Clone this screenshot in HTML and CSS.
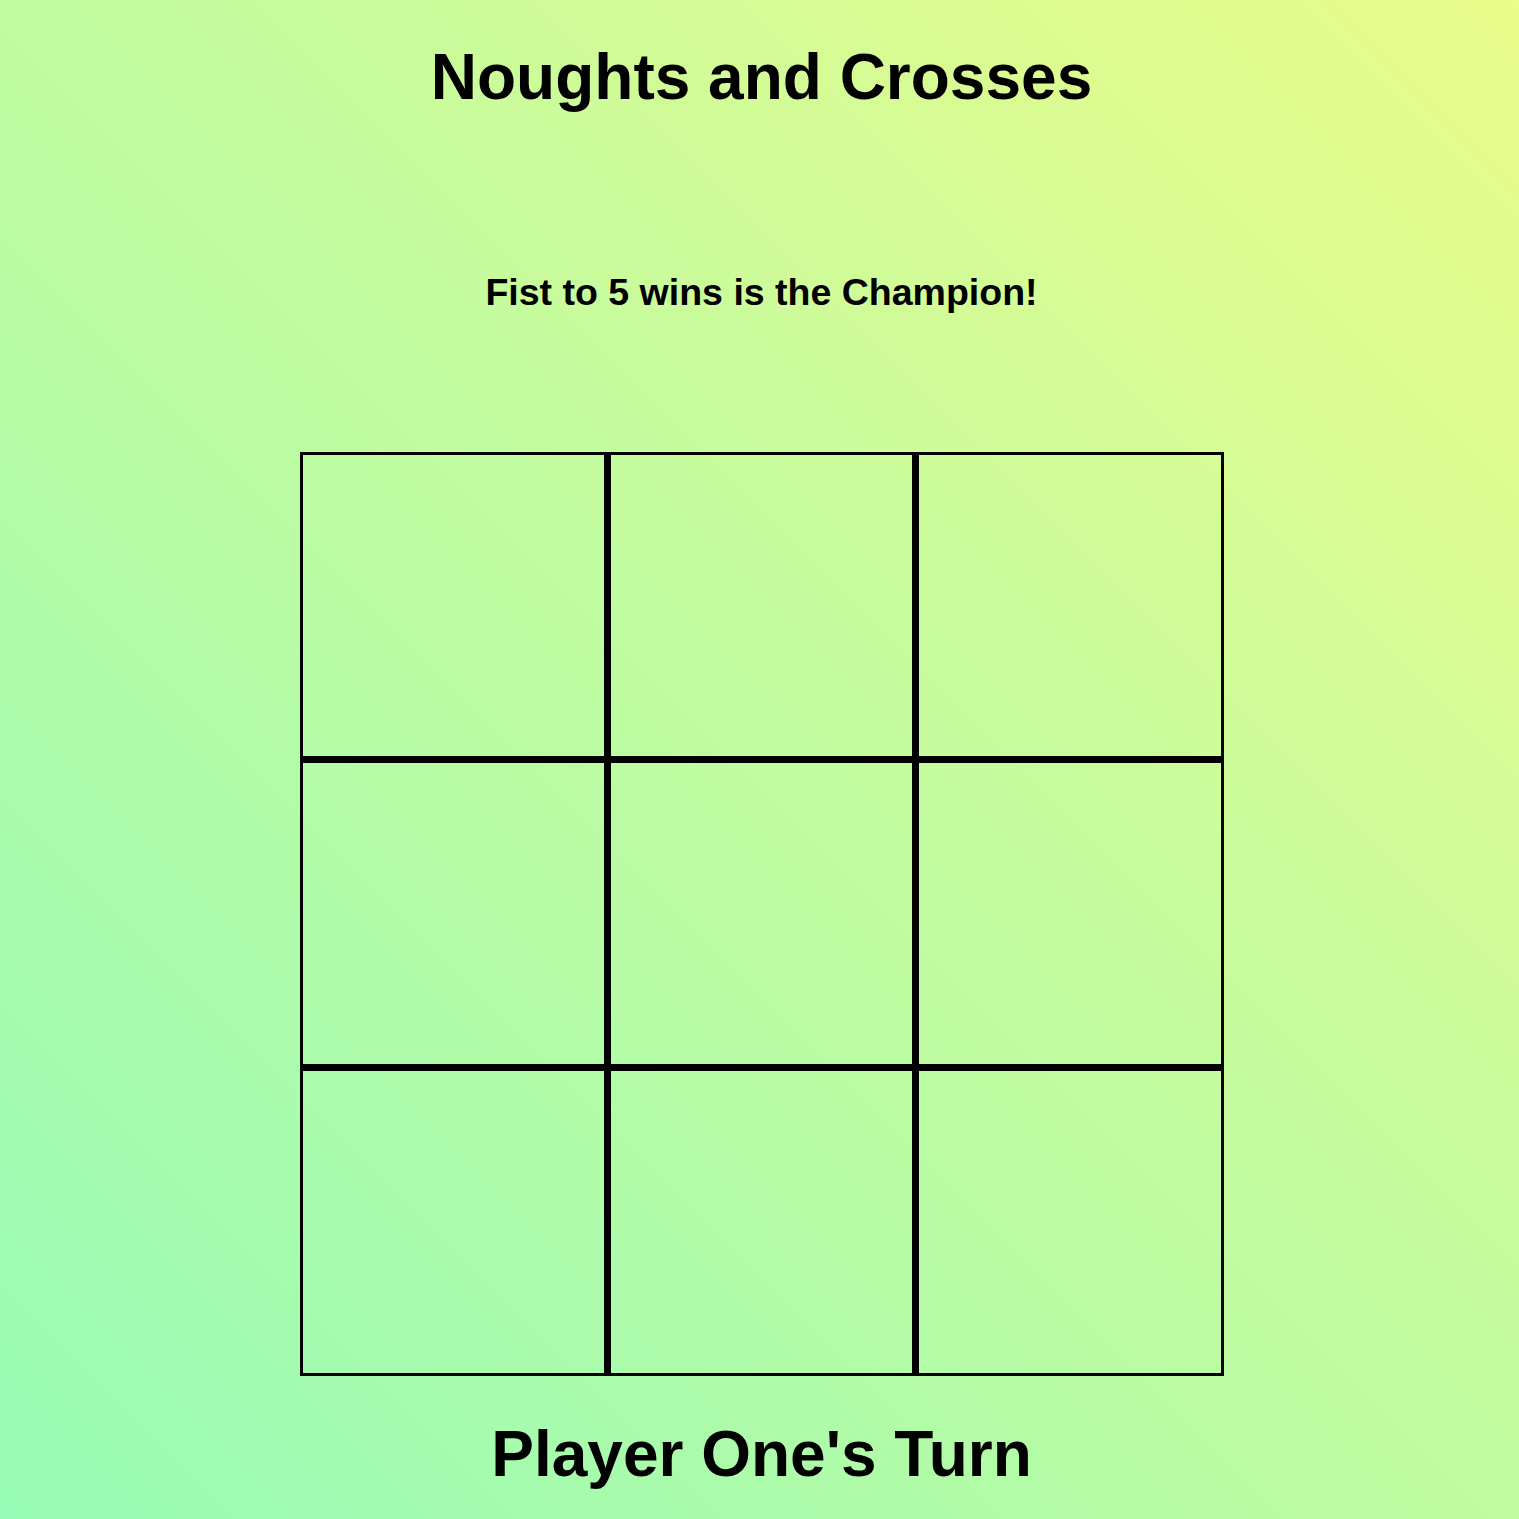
FILE: index.html
```html
<!DOCTYPE html>
<html lang="en">
<head>
<meta charset="utf-8">
<title>Noughts and Crosses</title>
<link rel="stylesheet" href="styles.css">
</head>
<body>
<main class="page">
  <h1 class="title">Noughts and Crosses</h1>
  <p class="subtitle">Fist to 5 wins is the Champion!</p>
  <div class="board">
    <div class="cell"></div>
    <div class="cell"></div>
    <div class="cell"></div>
    <div class="cell"></div>
    <div class="cell"></div>
    <div class="cell"></div>
    <div class="cell"></div>
    <div class="cell"></div>
    <div class="cell"></div>
  </div>
  <h2 class="turn">Player One's Turn</h2>
</main>
</body>
</html>
```
FILE: styles.css
```css
html, body {
  margin: 0;
  padding: 0;
}
body {
  min-height: 1519px;
  background: linear-gradient(45deg, #96fbb6 0%, #eafc8a 100%);
  font-family: "Liberation Sans", Arial, sans-serif;
  color: #000;
}
.page {
  display: flex;
  flex-direction: column;
  align-items: center;
  padding-left: 4px;
}
.title {
  margin: 37px 0 0;
  font-size: 64px;
  line-height: 80px;
  font-weight: bold;
}
.subtitle {
  margin: 155px 0 0;
  font-size: 37.5px;
  line-height: 40px;
  font-weight: bold;
}
.board {
  margin-top: 140px;
  width: 924px;
  height: 924px;
  display: grid;
  grid-template-columns: repeat(3, 1fr);
  grid-template-rows: repeat(3, 1fr);
}
.cell {
  border: 3px solid #000;
}
.cell:not(:nth-child(3n)) {
  border-right-width: 4px;
}
.cell:nth-child(-n+6) {
  border-bottom-width: 4px;
}
.turn {
  margin: 38px 0 0;
  font-size: 64px;
  line-height: 80px;
  font-weight: bold;
}
```
